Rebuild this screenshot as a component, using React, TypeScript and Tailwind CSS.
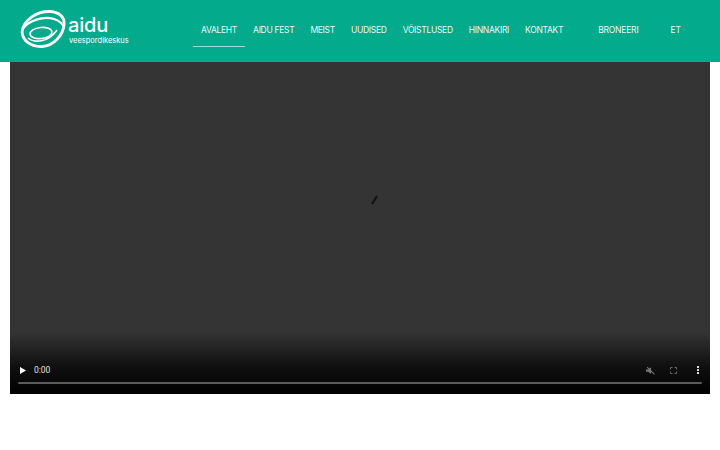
import React from 'react';

const navItems = ['AVALEHT', 'AIDU FEST', 'MEIST', 'UUDISED', 'VÕISTLUSED', 'HINNAKIRI', 'KONTAKT'];

const Logo = () => (
  <svg width="46" height="38" viewBox="0 0 46 38" fill="none" className="shrink-0">
    <path d="M2 22C3 10 17 1 30 1.500C40 2 45 8 44 15C43 25 34 36 22 36.500C12 37 3 32 2 22Z" stroke="white" strokeWidth="2.800" />
    <path d="M2 20C8 10 24 6 34 9C40 11 43 14 44 18" stroke="white" strokeWidth="2.200" />
    <ellipse cx="21" cy="23" rx="11" ry="5.500" transform="rotate(-6 21 23)" stroke="white" strokeWidth="1.600" />
    <path d="M8 28C14 33 28 33 37 20" stroke="white" strokeWidth="1.600" />
  </svg>
);

const App: React.FC = () => {
  return (
    <div className="w-[720px] h-[450px] bg-white overflow-hidden font-['Inter',sans-serif]">
      {/* Header */}
      <header className="h-[62px] bg-[#04aa8c] flex text-white">
        <div className="w-[193px] pl-[20px] pt-[10px] flex items-start gap-[3px]">
          <Logo />
          <div className="flex flex-col pt-[6px] -ml-[1px]">
            <span className="text-[20px] leading-[18px] font-medium tracking-[-0.2px]">aidu</span>
            <span className="text-[7.500px] leading-[9px] mt-[2px] ml-[1px]">veespordikeskus</span>
          </div>
        </div>
        <nav className="flex h-[47px]">
          {navItems.map((item, i) => (
            <a
              key={item}
              className={`px-2 pt-[25px] text-[8.500px] leading-[11px] tracking-[-0.3px] whitespace-nowrap text-white/95 ${i === 0 ? 'border-b border-white/60' : ''}`}
            >
              {item}
            </a>
          ))}
        </nav>
        <a className="ml-[27px] pt-[25px] text-[8.500px] leading-[11px] tracking-[-0.2px] text-white/95">BRONEERI</a>
        <a className="ml-[32px] pt-[25px] text-[8.500px] leading-[11px] tracking-[-0.2px] text-white/95">ET</a>
      </header>

      {/* Video */}
      <div className="relative mx-[10px] h-[332px] bg-[#343434] flex flex-col justify-end">
        <svg width="8" height="10" viewBox="0 0 8 10" className="absolute left-[360px] top-[133px]">
          <path d="M2 9L7 1" stroke="#111" strokeWidth="2" />
        </svg>
        <div className="h-[62px] bg-gradient-to-b from-[#00000000] via-[#000000b0] via-55% to-[#000000] px-[8px] pb-[10px] flex flex-col justify-end">
          <div className="flex items-center h-[12px]">
            <svg width="6" height="7" viewBox="0 0 6 7" className="ml-[2px]">
              <path d="M0 0L6 3.500L0 7Z" fill="white" />
            </svg>
            <span className="ml-[8px] text-[8.500px] text-[#e0e0e0] font-['Roboto',sans-serif]">0:00</span>
            <svg width="9" height="9" viewBox="0 0 8 8" className="ml-auto mr-[15px]">
              <path d="M0 3H2L4.500 1V7L2 5H0Z" fill="#777" />
              <path d="M1 1L7.500 7.500" stroke="#777" />
            </svg>
            <svg width="7" height="7" viewBox="0 0 7 7" className="mr-[20px]" fill="none" stroke="#666">
              <path d="M0.500 2.500V0.500H2.500M4.500 0.500H6.500V2.500M6.500 4.500V6.500H4.500M2.500 6.500H0.500V4.500" />
            </svg>
            <svg width="2" height="8" viewBox="0 0 2 8" className="mr-[3px]">
              <path d="M0 0H2V2H0ZM0 3H2V5H0ZM0 6H2V8H0Z" fill="#ddd" />
            </svg>
          </div>
          <div className="h-[2px] bg-[#5c5c5c] mt-[6px] rounded-full" />
        </div>
      </div>
    </div>
  );
};

export default App;
